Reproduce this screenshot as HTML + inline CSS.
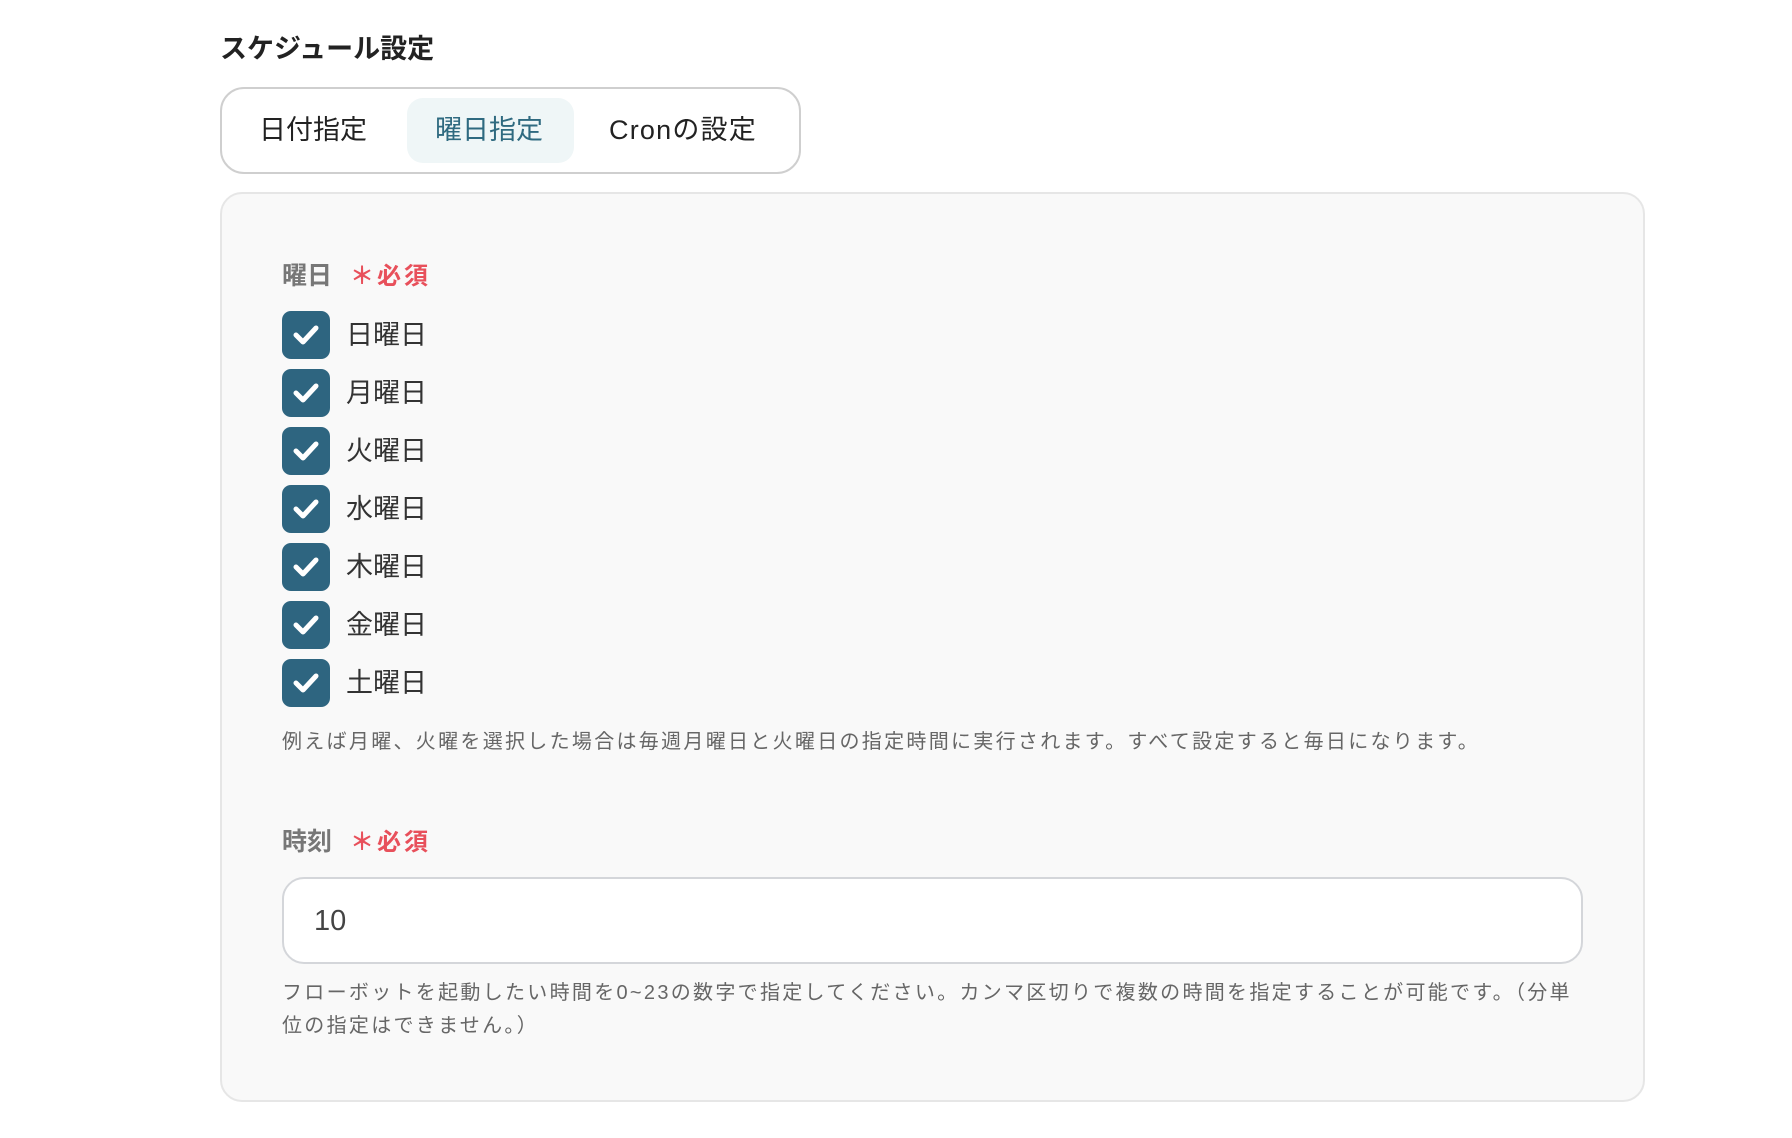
<!DOCTYPE html>
<html><head><meta charset="utf-8">
<style>
*{margin:0;padding:0;box-sizing:border-box}
body{width:1792px;height:1138px;background:#fff;font-family:"Liberation Sans","Noto Sans CJK JP",sans-serif;position:relative;overflow:hidden;color:#333}
.abs{position:absolute;white-space:nowrap}
.title{left:220px;top:30px;font-size:27px;font-weight:bold;color:#222;line-height:38px}
.tabs{left:220px;top:87px;width:581px;height:87px;border:2px solid #cfcfcf;border-radius:24px}
.tab{font-size:27px;line-height:40px;top:110px;color:#222}
.active{left:407px;top:98px;width:167px;height:65px;background:#eff6f7;border-radius:16px}
.panel{left:220px;top:192px;width:1433px;height:914px;background:#f9f9f9;border:2px solid #e6e6e6;border-radius:22px}
.label{left:282px;font-size:25px;font-weight:bold;color:#777;line-height:34px}
.req{color:#e8505b;font-size:24px;margin-left:18px;letter-spacing:3px}
.cb{left:282px;width:48px;height:48px;background:#2e6580;border-radius:9px}
.cb svg{position:absolute;left:11px;top:12px}
.cbt{left:346px;font-size:27px;line-height:36px;color:#333}
.help{left:282px;font-size:20px;letter-spacing:2.3px;color:#666;line-height:33px}
.input{left:282px;top:877px;width:1308px;height:87px;background:#fff;border:2px solid #d4d6da;border-radius:22px}
</style></head><body>
<div class="abs title">スケジュール設定</div>
<div class="abs tabs"></div>
<div class="abs active"></div>
<div class="abs tab" style="left:259px">日付指定</div>
<div class="abs tab" style="left:435px;color:#2f6a80">曜日指定</div>
<div class="abs tab" style="left:609px;letter-spacing:1.2px">Cronの設定</div>
<div class="abs panel" style="width:1425px;height:910px"></div>
<div class="abs label" style="top:259px">曜日<span class="req">＊必須</span></div>

<div class="abs cb" style="top:311px"><svg width="26" height="24" viewBox="0 0 26 24"><path d="M3 12 L10 19 L23 5" fill="none" stroke="#fff" stroke-width="5" stroke-linecap="round" stroke-linejoin="round"/></svg></div>
<div class="abs cbt" style="top:317px">日曜日</div>
<div class="abs cb" style="top:369px"><svg width="26" height="24" viewBox="0 0 26 24"><path d="M3 12 L10 19 L23 5" fill="none" stroke="#fff" stroke-width="5" stroke-linecap="round" stroke-linejoin="round"/></svg></div>
<div class="abs cbt" style="top:375px">月曜日</div>
<div class="abs cb" style="top:427px"><svg width="26" height="24" viewBox="0 0 26 24"><path d="M3 12 L10 19 L23 5" fill="none" stroke="#fff" stroke-width="5" stroke-linecap="round" stroke-linejoin="round"/></svg></div>
<div class="abs cbt" style="top:433px">火曜日</div>
<div class="abs cb" style="top:485px"><svg width="26" height="24" viewBox="0 0 26 24"><path d="M3 12 L10 19 L23 5" fill="none" stroke="#fff" stroke-width="5" stroke-linecap="round" stroke-linejoin="round"/></svg></div>
<div class="abs cbt" style="top:491px">水曜日</div>
<div class="abs cb" style="top:543px"><svg width="26" height="24" viewBox="0 0 26 24"><path d="M3 12 L10 19 L23 5" fill="none" stroke="#fff" stroke-width="5" stroke-linecap="round" stroke-linejoin="round"/></svg></div>
<div class="abs cbt" style="top:549px">木曜日</div>
<div class="abs cb" style="top:601px"><svg width="26" height="24" viewBox="0 0 26 24"><path d="M3 12 L10 19 L23 5" fill="none" stroke="#fff" stroke-width="5" stroke-linecap="round" stroke-linejoin="round"/></svg></div>
<div class="abs cbt" style="top:607px">金曜日</div>
<div class="abs cb" style="top:659px"><svg width="26" height="24" viewBox="0 0 26 24"><path d="M3 12 L10 19 L23 5" fill="none" stroke="#fff" stroke-width="5" stroke-linecap="round" stroke-linejoin="round"/></svg></div>
<div class="abs cbt" style="top:665px">土曜日</div>

<div class="abs help" style="top:726px">例えば月曜、火曜を選択した場合は毎週月曜日と火曜日の指定時間に実行されます。すべて設定すると毎日になります。</div>
<div class="abs label" style="top:825px">時刻<span class="req">＊必須</span></div>
<div class="abs input" style="width:1301px"></div>
<div class="abs" style="left:314px;top:902px;font-size:29px;color:#444;line-height:38px">10</div>
<div class="abs help" style="top:977px">フローボットを起動したい時間を0~23の数字で指定してください。カンマ区切りで複数の時間を指定することが可能です。（分単</div>
<div class="abs help" style="top:1010px">位の指定はできません。）</div>
</body></html>
